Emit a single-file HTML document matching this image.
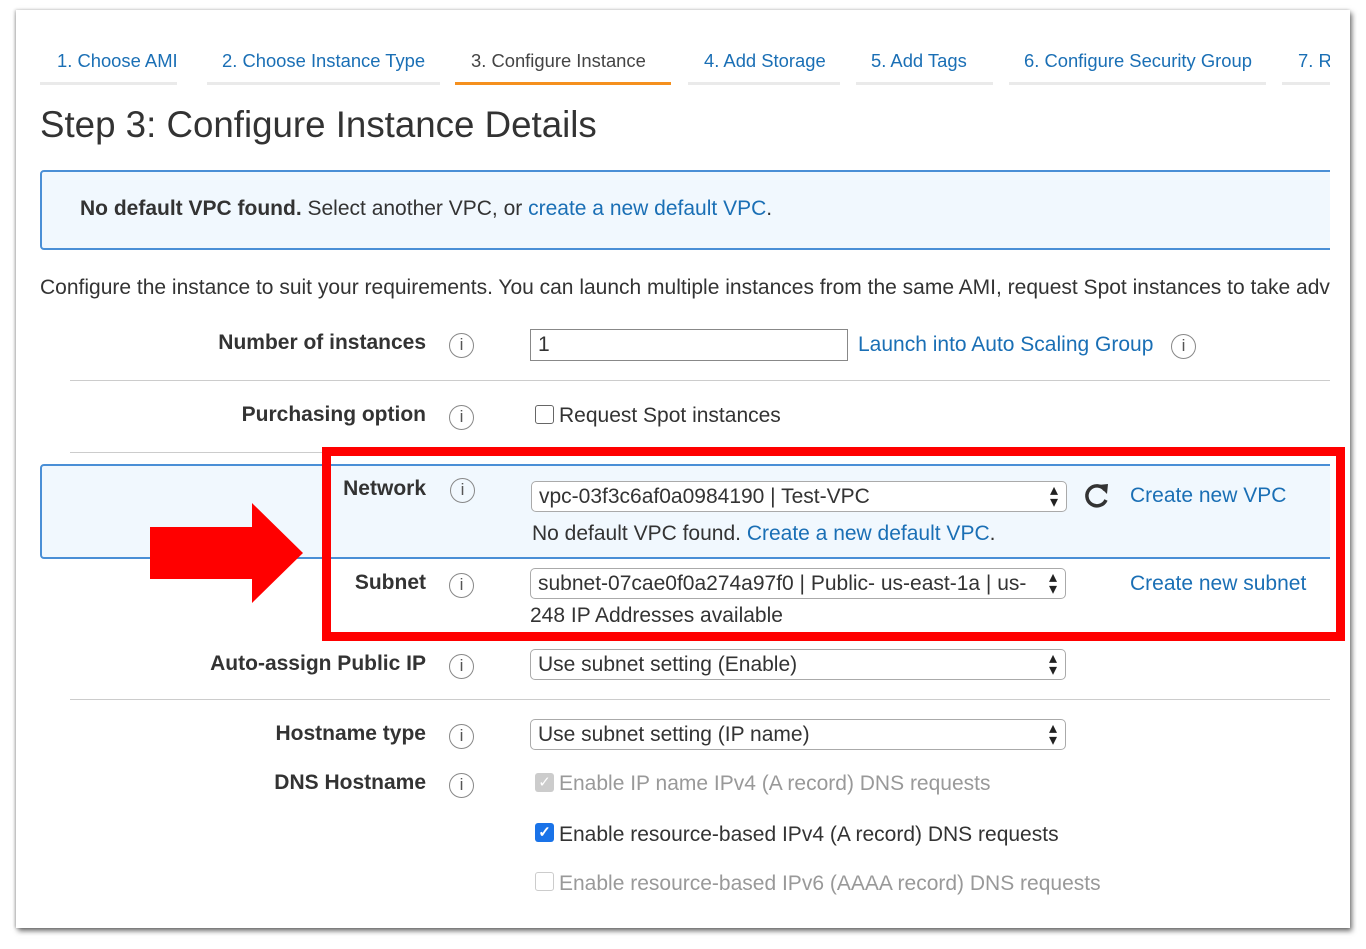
<!DOCTYPE html>
<html><head><meta charset="utf-8"><style>
*{margin:0;padding:0;box-sizing:border-box}
body{width:1366px;height:949px;background:#fff;position:relative;overflow:hidden;font-family:"Liberation Sans",Arial,sans-serif;color:#333}
.card{position:absolute;left:16px;top:10px;width:1334px;height:918px;background:#fff;box-shadow:2px 3px 5px rgba(0,0,0,.55),-1px 0 3px rgba(0,0,0,.25);overflow:hidden}
.a{position:absolute;white-space:nowrap}
.tab{position:absolute;top:50px;font-size:18.4px;color:#1a6fb5}
.ul{position:absolute;top:82px;height:3px;background:#eaeaea}
.lbl{position:absolute;font-size:21px;font-weight:bold;color:#333;text-align:right;white-space:nowrap}
.info{position:absolute;width:25px;height:25px;border:1.5px solid #888;border-radius:50%;font-size:17px;color:#555;text-align:center;line-height:22px;font-family:"Liberation Sans",sans-serif}
.sel{position:absolute;height:31px;border:1px solid #aaa;border-radius:5px;background:#fff;font-size:21px;line-height:29px;padding-left:7px;color:#333;overflow:hidden;white-space:nowrap}
.arr{position:absolute;right:1px;top:1px;height:27px;padding:2px 7px 0 6px;font-size:16px;color:#222;line-height:12px;background:#fff}
.link{color:#1a6fb5}
.hr{position:absolute;left:70px;width:1260px;height:1px;background:#ccc}
.t20{font-size:21px}
</style></head><body>
<div class="card">
<div style="position:absolute;left:-16px;top:-10px;width:1366px;height:949px">
<div class="tab" style="left:57px">1. Choose AMI</div>
<div class="tab" style="left:222px">2. Choose Instance Type</div>
<div class="tab" style="left:471px;color:#444">3. Configure Instance</div>
<div class="tab" style="left:704px">4. Add Storage</div>
<div class="tab" style="left:871px">5. Add Tags</div>
<div class="tab" style="left:1024px">6. Configure Security Group</div>
<div class="tab" style="left:1298px">7. R</div>
<div class="ul" style="left:40px;width:137px"></div>
<div class="ul" style="left:207px;width:233px"></div>
<div class="ul" style="left:455px;width:216px;background:#f5901e"></div>
<div class="ul" style="left:688px;width:152px"></div>
<div class="ul" style="left:856px;width:137px"></div>
<div class="ul" style="left:1009px;width:257px"></div>
<div class="ul" style="left:1282px;width:48px"></div>

<div class="a" style="left:40px;top:104px;font-size:36.7px;color:#333">Step 3: Configure Instance Details</div>

<div style="position:absolute;left:40px;top:170px;width:1300px;height:80px;background:#f1f8fe;border:2px solid #4a8fd6;border-radius:4px"></div>
<div class="a t20" style="left:80px;top:197px"><b>No default VPC found.</b> Select another VPC, or <span class="link">create a new default VPC</span>.</div>

<div class="a t20" style="left:40px;top:276px">Configure the instance to suit your requirements. You can launch multiple instances from the same AMI, request Spot instances to take advantage</div>

<div class="lbl" style="right:940px;top:331px">Number of instances</div>
<div class="info" style="left:449px;top:333px">i</div>
<div style="position:absolute;left:530px;top:329px;width:318px;height:32px;border:1px solid #888;font-size:21px;line-height:30px;padding-left:7px">1</div>
<div class="a t20 link" style="left:858px;top:333px">Launch into Auto Scaling Group</div>
<div class="info" style="left:1171px;top:334px">i</div>
<div class="hr" style="top:380px"></div>

<div class="lbl" style="right:940px;top:403px">Purchasing option</div>
<div class="info" style="left:449px;top:405px">i</div>
<div style="position:absolute;left:535px;top:405px;width:19px;height:19px;border:1.5px solid #666;border-radius:3px"></div>
<div class="a t20" style="left:559px;top:404px">Request Spot instances</div>
<div class="hr" style="top:452px"></div>

<div style="position:absolute;left:40px;top:464px;width:1300px;height:95px;background:#f1f8fe;border:2px solid #4a8fd6;border-radius:4px"></div>
<div class="lbl" style="right:940px;top:477px">Network</div>
<div class="info" style="left:450px;top:478px">i</div>
<div class="sel" style="left:531px;top:481px;width:536px">vpc-03f3c6af0a0984190 | Test-VPC<span class="arr">▴<br>▾</span></div>
<svg style="position:absolute;left:1083px;top:481px" width="30" height="28" viewBox="0 0 30 28"><path d="M22 9 A10 10 0 1 0 23 19" fill="none" stroke="#333" stroke-width="3.5"/><path d="M15 4 L25 3 L24 13 Z" fill="#333"/></svg>
<div class="a t20 link" style="left:1130px;top:484px">Create new VPC</div>
<div class="a t20" style="left:532px;top:522px">No default VPC found. <span class="link">Create a new default VPC</span>.</div>

<div class="lbl" style="right:940px;top:571px">Subnet</div>
<div class="info" style="left:449px;top:573px">i</div>
<div class="sel" style="left:530px;top:568px;width:536px">subnet-07cae0f0a274a97f0 | Public- us-east-1a | us-<span class="arr">▴<br>▾</span></div>
<div class="a t20 link" style="left:1130px;top:572px">Create new subnet</div>
<div class="a t20" style="left:530px;top:604px">248 IP Addresses available</div>

<div class="lbl" style="right:940px;top:652px">Auto-assign Public IP</div>
<div class="info" style="left:449px;top:654px">i</div>
<div class="sel" style="left:530px;top:649px;width:536px">Use subnet setting (Enable)<span class="arr">▴<br>▾</span></div>
<div class="hr" style="top:699px"></div>

<div class="lbl" style="right:940px;top:722px">Hostname type</div>
<div class="info" style="left:449px;top:724px">i</div>
<div class="sel" style="left:530px;top:719px;width:536px">Use subnet setting (IP name)<span class="arr">▴<br>▾</span></div>

<div class="lbl" style="right:940px;top:771px">DNS Hostname</div>
<div class="info" style="left:449px;top:773px">i</div>
<div style="position:absolute;left:535px;top:773px;width:19px;height:19px;background:#ccc;border-radius:3px;color:#fff;font-size:15px;text-align:center;line-height:19px">✓</div>
<div class="a t20" style="left:559px;top:772px;color:#999">Enable IP name IPv4 (A record) DNS requests</div>
<div style="position:absolute;left:535px;top:823px;width:19px;height:19px;background:#1a73e8;border-radius:3px;color:#fff;font-size:15px;font-weight:bold;text-align:center;line-height:19px">✓</div>
<div class="a t20" style="left:559px;top:823px">Enable resource-based IPv4 (A record) DNS requests</div>
<div style="position:absolute;left:535px;top:872px;width:19px;height:19px;border:1.5px solid #ccc;border-radius:3px"></div>
<div class="a t20" style="left:559px;top:872px;color:#999">Enable resource-based IPv6 (AAAA record) DNS requests</div>

<div style="position:absolute;left:1330px;top:0;width:36px;height:949px;background:#fff"></div>
</div>
</div>

<div style="position:absolute;left:322px;top:447px;width:1023px;height:194px;border:9px solid #f00"></div>
<svg style="position:absolute;left:150px;top:503px" width="154" height="101"><path d="M0 24 H102 V0 L153 50 L102 100 V76 H0 Z" fill="#f00"/></svg>
</body></html>
